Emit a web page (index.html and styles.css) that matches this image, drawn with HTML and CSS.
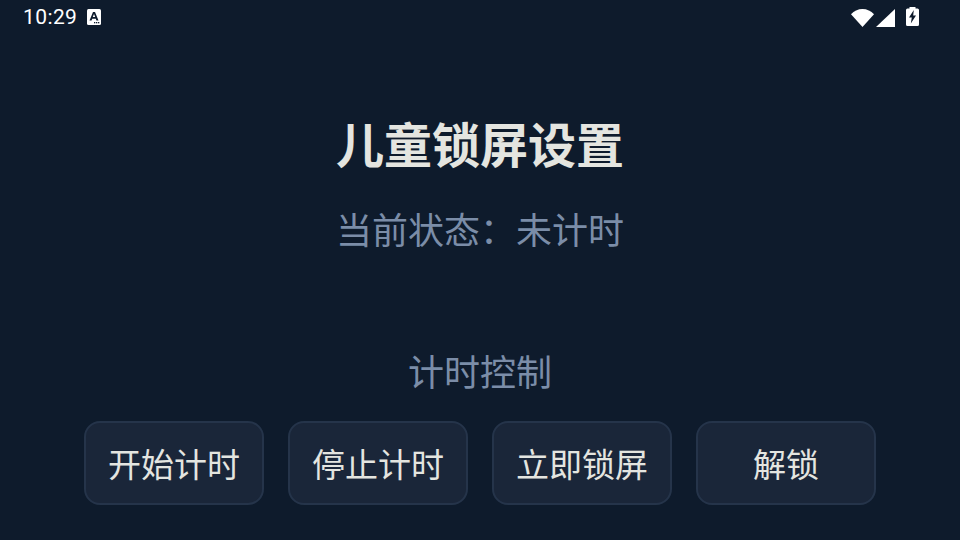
FILE: index.html
```html
<!DOCTYPE html>
<html lang="zh-CN">
<head>
    <meta charset="UTF-8">
    <meta name="viewport" content="width=device-width, initial-scale=1.0">
    <title>儿童锁屏设置</title>
    <link rel="stylesheet" href="styles.css">
</head>
<body>
    <div class="status-bar">
        <div class="status-left">
            <span class="clock">10:29</span>
            <svg class="icon-a" width="14" height="16" viewBox="0 0 14 16">
                <rect x="0" y="0" width="14" height="16" rx="1.500" fill="#fff"/>
                <path d="M2.500 11.500 6 3h2l3.500 8.500H9.400l-.6-1.700H5.200l-.6 1.700zM5.800 8.100h2.400L7 5z" fill="#0e1b2c"/>
                <rect x="7" y="13" width="1.300" height="1.300" fill="#0e1b2c"/>
                <rect x="9" y="13" width="1.300" height="1.300" fill="#0e1b2c"/>
                <rect x="11" y="13" width="1.300" height="1.300" fill="#0e1b2c"/>
            </svg>
        </div>
        <div class="status-right">
            <svg class="icon-wifi" width="23" height="18" viewBox="0 0 23 18">
                <path d="M0 5.300C3 2 7 0 11.500 0S20 2 23 5.300L11.500 18z" fill="#fff"/>
            </svg>
            <svg class="icon-signal" width="19" height="18" viewBox="0 0 19 18">
                <path d="M0 18 19 0v18z" fill="#fff"/>
            </svg>
            <svg class="icon-battery" width="13" height="19" viewBox="0 0 13 19">
                <path d="M3.500 0h6v1.500h2q1.500 0 1.500 1.500v14.500q0 1.500-1.500 1.500h-10Q0 19 0 17.500V3q0-1.500 1.500-1.500h2z" fill="#fff"/>
                <path d="M7.800 3 3 10.500h2.800L4.800 16.500l5.200-8H7.200z" fill="#0e1b2c"/>
            </svg>
        </div>
    </div>

    <main class="content">
        <h1 class="title">儿童锁屏设置</h1>
        <p class="status-text">当前状态：未计时</p>
        <h2 class="section-label">计时控制</h2>
        <div class="button-group">
            <button class="ctl-btn">开始计时</button>
            <button class="ctl-btn">停止计时</button>
            <button class="ctl-btn">立即锁屏</button>
            <button class="ctl-btn">解锁</button>
        </div>
    </main>
</body>
</html>
```

FILE: styles.css
```css
/* Basic styling */
body {
    font-family: Roboto, "Noto Sans CJK SC", sans-serif;
    background-color: #0e1b2c;
    color: #e4e5e0;
    margin: 0;
    padding: 0;
    width: 960px;
    height: 540px;
    overflow: hidden;
}

/* Status bar */
.status-bar {
    height: 36px;
    padding: 0 41px 0 23px;
    display: flex;
    align-items: center;
    justify-content: space-between;
    color: #fff;
}

.status-left {
    display: flex;
    align-items: center;
    gap: 10px;
    padding-bottom: 2px;
}

.clock {
    font-size: 21px;
    letter-spacing: 0.4px;
}

.status-right {
    display: flex;
    align-items: center;
    gap: 2px;
}

.status-right svg {
    display: block;
}

.icon-battery {
    margin: -3px 0 0 9px;
}

/* Main content */
.content {
    display: flex;
    flex-direction: column;
    align-items: center;
}

.title {
    margin: 76px 0 0;
    font-size: 48px;
    line-height: 70px;
    font-weight: 700;
}

.status-text {
    margin: 24px 0 0;
    font-size: 36px;
    line-height: 52px;
    color: #7b8da8;
}

.section-label {
    margin: 90px 0 0;
    font-size: 36px;
    line-height: 52px;
    font-weight: 400;
    color: #7b8da8;
}

.button-group {
    display: flex;
    gap: 24px;
    margin-top: 21px;
}

.ctl-btn {
    width: 180px;
    height: 84px;
    padding: 0;
    font-family: inherit;
    font-size: 33px;
    color: #e4e5e0;
    background-color: #1a2639;
    border: 2px solid #25344a;
    border-radius: 16px;
}
```
